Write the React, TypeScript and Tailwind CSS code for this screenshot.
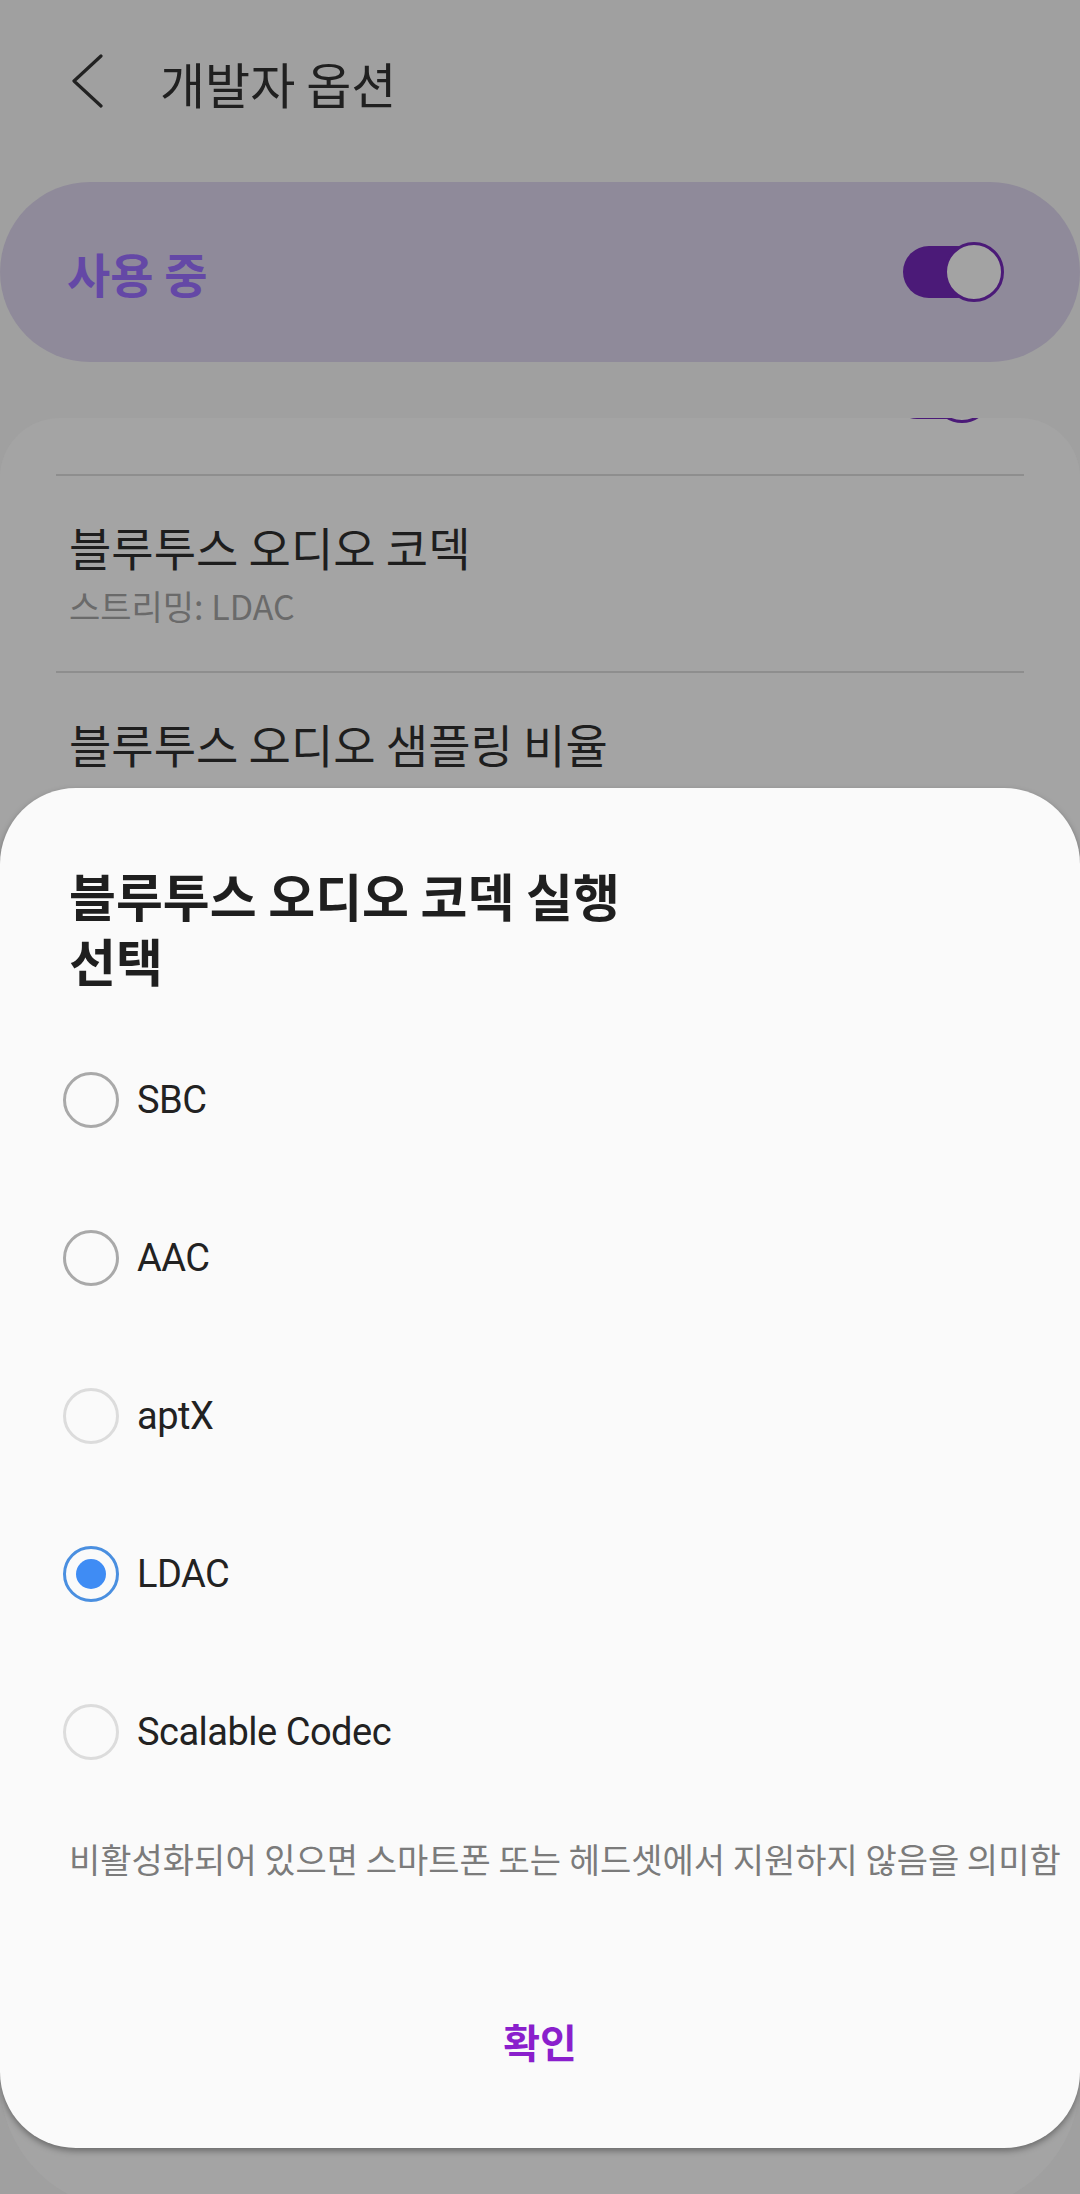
const KR = "font-['Noto_Sans_CJK_KR',sans-serif]";

function Toggle() {
  return (
    <div className="relative h-[60px] w-[101px] shrink-0">
      <div className="absolute left-0 top-[4px] h-[52px] w-[80px] rounded-full bg-[#4b1a78]" />
      <div className="absolute right-0 top-0 h-[60px] w-[60px] rounded-full border-[3px] border-[#4b1a78] bg-[#a3a3a3]" />
    </div>
  );
}

type Option = { label: string; state: 'on' | 'off' | 'disabled' };

const options: Option[] = [
  { label: 'SBC', state: 'off' },
  { label: 'AAC', state: 'off' },
  { label: 'aptX', state: 'disabled' },
  { label: 'LDAC', state: 'on' },
  { label: 'Scalable Codec', state: 'disabled' },
];

function Radio({ state }: { state: Option['state'] }) {
  if (state === 'on') {
    return (
      <div className="flex h-[56px] w-[56px] shrink-0 items-center justify-center rounded-full border-[3px] border-[#4a8fe0]">
        <div className="h-[30px] w-[30px] rounded-full bg-[#3f8cf4]" />
      </div>
    );
  }
  return (
    <div
      className={
        state === 'off'
          ? 'h-[56px] w-[56px] shrink-0 rounded-full border-[3px] border-[#a9a9a9]'
          : 'h-[56px] w-[56px] shrink-0 rounded-full border-[3px] border-[#dcdcdc]'
      }
    />
  );
}

export default function App() {
  return (
    <div className={`relative h-[2194px] w-[1080px] overflow-hidden bg-[#a0a0a0] ${KR}`}>
      {/* Header */}
      <div className="flex h-[164px] items-center pl-[70px]">
        <svg width="36" height="56" viewBox="0 0 36 56" className="shrink-0">
          <path d="M31 2 L4 27 L31 52" fill="none" stroke="#222" strokeWidth="3.2" strokeLinecap="round" strokeLinejoin="round" />
        </svg>
        <span className="ml-[54px] text-[49px] leading-none text-[#202020]">개발자 옵션</span>
      </div>

      {/* Master switch */}
      <div className="mt-[18px] flex h-[180px] items-center justify-between rounded-[90px] bg-[#8f8a9a] pl-[67px] pr-[76px]">
        <span className="text-[47px] font-bold leading-none text-[#6448a6]">사용 중</span>
        <Toggle />
      </div>

      {/* Settings list */}
      <div className="mt-[56px] h-[1792px] overflow-hidden rounded-t-[60px] rounded-b-[130px] bg-[#a4a4a4] px-[56px]">
        <div className="flex h-[56px] justify-end pr-[32px]">
          <div className="-mt-[55px]">
            <Toggle />
          </div>
        </div>
        <div className="h-[2px] bg-[#8e8e8e]" />
        <div className="pb-[45px] pl-[13px] pt-[42px]">
          <div className="text-[46px] leading-[56px] text-[#1e1e1e]">블루투스 오디오 코덱</div>
          <div className="mt-[12px] text-[34px] leading-[40px] text-[#6a6a6a]">스트리밍: LDAC</div>
        </div>
        <div className="h-[2px] bg-[#8e8e8e]" />
        <div className="pl-[13px] pt-[42px]">
          <div className="text-[46px] leading-[56px] text-[#1e1e1e]">블루투스 오디오 샘플링 비율</div>
        </div>
      </div>

      {/* Dialog */}
      <div className="absolute left-0 right-0 top-[788px] h-[1360px] rounded-[76px] bg-[#fafafa] shadow-[0_3px_6px_rgba(0,0,0,0.35)]">
        <div className="pl-[69px] pt-[75px] text-[51px] font-bold leading-[65px] text-[#1f1f1f]">
          블루투스 오디오 코덱 실행
          <br />
          선택
        </div>
        <div className="mt-[28px] flex flex-col pl-[63px]">
          {options.map((o) => (
            <div key={o.label} className="flex h-[158px] items-center gap-[18px]">
              <Radio state={o.state} />
              <span className="font-['Roboto',sans-serif] text-[38px] leading-none tracking-[-0.5px] text-[#222]">{o.label}</span>
            </div>
          ))}
        </div>
        <div className="mt-[24px] whitespace-nowrap pl-[69px] text-[34px] leading-[48px] text-[#7b7b7b]">
          비활성화되어 있으면 스마트폰 또는 헤드셋에서 지원하지 않음을 의미함
        </div>
        <div className="mt-[108px] flex h-[100px] items-center justify-center">
          <span className="text-[40px] font-bold leading-none text-[#8a1fcc]">확인</span>
        </div>
      </div>
    </div>
  );
}
